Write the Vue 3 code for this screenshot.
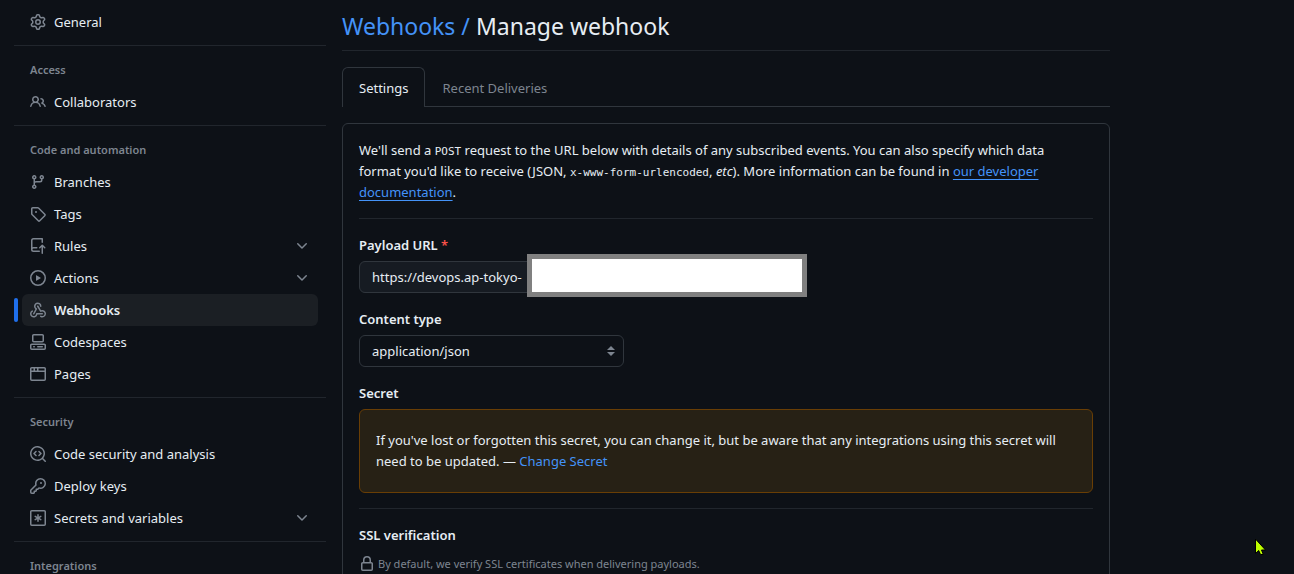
<script setup>
import { ref } from 'vue'

const payloadUrl = ref('https://devops.ap-tokyo-')
const contentType = ref('application/json')

const icons = {
  gear: 'M8 0a8.2 8.2 0 0 1 .701.031C9.444.095 9.99.645 10.16 1.29l.288 1.107c.018.066.079.158.212.224.231.114.454.243.668.386.123.082.233.09.299.071l1.103-.303c.644-.176 1.392.021 1.82.63.27.385.506.792.704 1.218.315.675.111 1.422-.364 1.891l-.814.806c-.049.048-.098.147-.088.294.016.257.016.515 0 .772-.01.147.038.246.088.294l.814.806c.475.469.679 1.216.364 1.891a7.977 7.977 0 0 1-.704 1.217c-.428.61-1.176.807-1.82.63l-1.102-.302c-.067-.019-.177-.011-.3.071a5.909 5.909 0 0 1-.668.386c-.133.066-.194.158-.211.224l-.29 1.106c-.168.646-.715 1.196-1.458 1.26a8.006 8.006 0 0 1-1.402 0c-.743-.064-1.289-.614-1.458-1.26l-.289-1.106c-.018-.066-.079-.158-.212-.224a5.738 5.738 0 0 1-.668-.386c-.123-.082-.233-.09-.299-.071l-1.103.303c-.644.176-1.392-.021-1.82-.63a8.12 8.12 0 0 1-.704-1.218c-.315-.675-.111-1.422.363-1.891l.815-.806c.05-.048.098-.147.088-.294a6.214 6.214 0 0 1 0-.772c.01-.147-.038-.246-.088-.294l-.815-.806C.635 6.045.431 5.298.746 4.623a7.92 7.92 0 0 1 .704-1.217c.428-.61 1.176-.807 1.82-.63l1.102.302c.067.019.177.011.3-.071.214-.143.437-.272.668-.386.133-.066.194-.158.211-.224l.29-1.106C6.009.645 6.556.095 7.299.03 7.53.01 7.764 0 8 0Zm-.571 1.525c-.036.003-.108.036-.137.146l-.289 1.105c-.147.561-.549.967-.998 1.189-.173.086-.34.183-.5.29-.417.278-.97.423-1.529.27l-1.103-.303c-.109-.03-.175.016-.195.045-.22.312-.412.644-.573.99-.014.031-.021.11.059.19l.815.806c.411.406.562.957.53 1.456a4.709 4.709 0 0 0 0 .582c.032.499-.119 1.05-.53 1.456l-.815.806c-.081.08-.073.159-.059.19.162.346.353.677.573.989.02.03.085.076.195.046l1.102-.303c.56-.153 1.113-.008 1.53.27.161.107.328.204.501.29.447.222.85.629.997 1.189l.289 1.105c.029.109.101.143.137.146a6.6 6.6 0 0 0 1.142 0c.036-.003.108-.036.137-.146l.289-1.105c.147-.561.549-.967.998-1.189.173-.086.34-.183.5-.29.417-.278.97-.423 1.529-.27l1.103.303c.109.029.175-.016.195-.045.22-.313.411-.644.573-.99.014-.031.021-.11-.059-.19l-.815-.806c-.411-.406-.562-.957-.53-1.456a4.709 4.709 0 0 0 0-.582c-.032-.499.119-1.05.53-1.456l.815-.806c.081-.08.073-.159.059-.19a6.464 6.464 0 0 0-.573-.989c-.02-.03-.085-.076-.195-.046l-1.102.303c-.56.153-1.113.008-1.53-.27a4.44 4.44 0 0 0-.501-.29c-.447-.222-.85-.629-.997-1.189l-.289-1.105c-.029-.11-.101-.143-.137-.146a6.6 6.6 0 0 0-1.142 0ZM11 8a3 3 0 1 1-6 0 3 3 0 0 1 6 0ZM9.5 8a1.5 1.5 0 1 0-3.001.001A1.5 1.5 0 0 0 9.5 8Z',
  people: 'M2 5.5a3.5 3.5 0 1 1 5.898 2.549 5.508 5.508 0 0 1 3.034 4.084.75.75 0 1 1-1.482.235 4 4 0 0 0-7.9 0 .75.75 0 0 1-1.482-.236A5.507 5.507 0 0 1 3.102 8.05 3.493 3.493 0 0 1 2 5.5ZM11 4a3.001 3.001 0 0 1 2.22 5.018 5.01 5.01 0 0 1 2.56 3.012.749.749 0 0 1-.885.954.752.752 0 0 1-.549-.514 3.507 3.507 0 0 0-2.522-2.372.75.75 0 0 1-.574-.73v-.352a.75.75 0 0 1 .416-.672A1.5 1.5 0 0 0 11 5.5.75.75 0 0 1 11 4Zm-5.5-.5a2 2 0 1 0-.001 3.999A2 2 0 0 0 5.5 3.5Z',
  branch: 'M9.5 3.25a2.25 2.25 0 1 1 3 2.122V6A2.5 2.5 0 0 1 10 8.5H6a1 1 0 0 0-1 1v1.128a2.251 2.251 0 1 1-1.5 0V5.372a2.25 2.25 0 1 1 1.5 0v1.836A2.493 2.493 0 0 1 6 7h4a1 1 0 0 0 1-1v-.628A2.25 2.25 0 0 1 9.5 3.25Zm-6 0a.75.75 0 1 0 1.5 0 .75.75 0 0 0-1.5 0Zm8.25-.75a.75.75 0 1 0 0 1.5.75.75 0 0 0 0-1.5ZM4.25 12a.75.75 0 1 0 0 1.5.75.75 0 0 0 0-1.5Z',
  tag: 'M1 7.775V2.75C1 1.784 1.784 1 2.75 1h5.025c.464 0 .91.184 1.238.513l6.25 6.25a1.75 1.75 0 0 1 0 2.474l-5.026 5.026a1.75 1.75 0 0 1-2.474 0l-6.25-6.25A1.752 1.752 0 0 1 1 7.775Zm1.5 0c0 .066.026.13.073.177l6.25 6.25a.25.25 0 0 0 .354 0l5.025-5.025a.25.25 0 0 0 0-.354l-6.25-6.25a.25.25 0 0 0-.177-.073H2.75a.25.25 0 0 0-.25.25ZM6 5a1 1 0 1 1 0 2 1 1 0 0 1 0-2Z',
  rules: 'M1 2.5A2.5 2.5 0 0 1 3.5 0h8.75a.75.75 0 0 1 .75.75v3.5a.75.75 0 0 1-1.5 0V1.5h-8a1 1 0 0 0-1 1v6.708A2.493 2.493 0 0 1 3.5 9h3.25a.75.75 0 0 1 0 1.5H3.5a1 1 0 0 0 0 2h5.75a.75.75 0 0 1 0 1.5H3.5A2.5 2.5 0 0 1 1 11.5Zm13.23 7.79-1.224-1.224v6.184a.75.75 0 0 1-1.5 0V9.066L10.28 10.29a.75.75 0 0 1-1.06-1.061l2.505-2.504a.75.75 0 0 1 1.06 0L15.29 9.23a.751.751 0 0 1-.018 1.042.751.751 0 0 1-1.042.018Z',
  play: 'M8 0a8 8 0 1 1 0 16A8 8 0 0 1 8 0ZM1.5 8a6.5 6.5 0 1 0 13 0 6.5 6.5 0 0 0-13 0Zm4.879-2.773 4.264 2.559a.25.25 0 0 1 0 .428l-4.264 2.559A.25.25 0 0 1 6 10.559V5.442a.25.25 0 0 1 .379-.215Z',
  webhook: 'M5.5 4.25a2.25 2.25 0 0 1 4.5 0 .75.75 0 0 0 1.5 0 3.75 3.75 0 1 0-6.14 2.889l-2.272 4.258a.75.75 0 0 0 1.324.706L7 7.25a.75.75 0 0 0-.309-1.015A2.25 2.25 0 0 1 5.5 4.25Z M7.364 3.607a.75.75 0 0 1 1.03.257l2.608 4.349a3.75 3.75 0 1 1-.628 6.785.75.75 0 0 1 .752-1.299 2.25 2.25 0 1 0-.033-3.88.75.75 0 0 1-1.03-.256L7.107 4.636a.75.75 0 0 1 .257-1.03Z M2.9 8.776A.75.75 0 0 1 2.625 9.8 2.25 2.25 0 1 0 6 11.75a.75.75 0 0 1 .75-.751h5.5a.75.75 0 0 1 0 1.5H7.425a3.751 3.751 0 1 1-5.55-3.998.75.75 0 0 1 1.024.274Z',
  codespaces: 'M0 11.25c0-.966.784-1.75 1.75-1.75h12.5c.966 0 1.75.784 1.75 1.75v3A1.75 1.75 0 0 1 14.25 16H1.75A1.75 1.75 0 0 1 0 14.25Zm2-9.5C2 .784 2.784 0 3.75 0h8.5C13.216 0 14 .784 14 1.75v5a1.75 1.75 0 0 1-1.75 1.75h-8.5A1.75 1.75 0 0 1 2 6.75Zm1.75-.25a.25.25 0 0 0-.25.25v5c0 .138.112.25.25.25h8.5a.25.25 0 0 0 .25-.25v-5a.25.25 0 0 0-.25-.25Zm-2 9.5a.25.25 0 0 0-.25.25v3c0 .138.112.25.25.25h12.5a.25.25 0 0 0 .25-.25v-3a.25.25 0 0 0-.25-.25ZM7 12.75a.75.75 0 0 1 .75-.75h4.5a.75.75 0 0 1 0 1.5h-4.5a.75.75 0 0 1-.75-.75Zm-4 0a.75.75 0 0 1 .75-.75h.5a.75.75 0 0 1 0 1.5h-.5a.75.75 0 0 1-.75-.75Z',
  browser: 'M0 2.75C0 1.784.784 1 1.75 1h12.5c.966 0 1.75.784 1.75 1.75v10.5A1.75 1.75 0 0 1 14.25 15H1.75A1.75 1.75 0 0 1 0 13.25ZM14.5 6h-13v7.25c0 .138.112.25.25.25h12.5a.25.25 0 0 0 .25-.25Zm-6-3.5v2h6V2.75a.25.25 0 0 0-.25-.25ZM5 2.5v2h2v-2Zm-3.25 0a.25.25 0 0 0-.25.25V4.5h2v-2Z',
  codescan: 'M8.47 4.97a.75.75 0 0 0 0 1.06L9.94 7.5 8.47 8.97a.75.75 0 1 0 1.06 1.06l2-2a.75.75 0 0 0 0-1.06l-2-2a.75.75 0 0 0-1.06 0ZM6.53 6.03a.75.75 0 0 0-1.06-1.06l-2 2a.75.75 0 0 0 0 1.06l2 2a.75.75 0 1 0 1.06-1.06L5.06 7.5l1.47-1.47Z M12.246 13.307a7.501 7.501 0 1 1 1.06-1.06l2.474 2.473a.749.749 0 0 1-.326 1.275.749.749 0 0 1-.734-.215ZM1.5 7.5a6.002 6.002 0 0 0 3.608 5.504 6.002 6.002 0 0 0 6.486-1.117.748.748 0 0 1 .292-.293A6 6 0 1 0 1.5 7.5Z',
  key: 'M10.5 0a5.499 5.499 0 1 1-1.288 10.848l-.932.932a.749.749 0 0 1-.53.22H7v.75a.749.749 0 0 1-.22.53l-.5.5a.749.749 0 0 1-.53.22H5v.75a.749.749 0 0 1-.22.53l-.5.5a.749.749 0 0 1-.53.22h-2A1.75 1.75 0 0 1 0 14.25v-2c0-.199.079-.389.22-.53l4.932-4.932A5.5 5.5 0 0 1 10.5 0Zm-4 5.5c-.001.431.069.86.205 1.269a.75.75 0 0 1-.181.768L1.5 12.56v1.69c0 .138.112.25.25.25h1.69l.06-.06v-1.19a.75.75 0 0 1 .75-.75h1.19l.06-.06v-1.19a.75.75 0 0 1 .75-.75h1.19l1.023-1.025a.75.75 0 0 1 .768-.18A4 4 0 1 0 6.5 5.5ZM11 6a1 1 0 1 1 0-2 1 1 0 0 1 0 2Z',
  asterisk: 'M1.75 0h12.5C15.216 0 16 .784 16 1.75v12.5A1.75 1.75 0 0 1 14.25 16H1.75A1.75 1.75 0 0 1 0 14.25V1.75C0 .784.784 0 1.75 0ZM1.5 1.75v12.5c0 .138.112.25.25.25h12.5a.25.25 0 0 0 .25-.25V1.75a.25.25 0 0 0-.25-.25H1.75a.25.25 0 0 0-.25.25ZM8 4a.75.75 0 0 1 .75.75V6.7l1.69-.975a.75.75 0 0 1 .75 1.3L9.5 8l1.69.976a.75.75 0 0 1-.75 1.298L8.75 9.3v1.951a.75.75 0 0 1-1.5 0V9.299l-1.69.976a.75.75 0 0 1-.75-1.3L6.5 8l-1.69-.975a.75.75 0 0 1 .75-1.3l1.69.976V4.75A.75.75 0 0 1 8 4Z',
  chevron: 'M12.78 5.22a.749.749 0 0 1 0 1.06l-4.25 4.25a.749.749 0 0 1-1.06 0L3.22 6.28a.749.749 0 1 1 1.06-1.06L8 8.939l3.72-3.719a.749.749 0 0 1 1.06 0Z',
  lock: 'M4 4a4 4 0 0 1 8 0v2h.25c.966 0 1.75.784 1.75 1.75v5.5A1.75 1.75 0 0 1 12.25 15h-8.5A1.75 1.75 0 0 1 2 13.25v-5.5C2 6.784 2.784 6 3.75 6H4Zm8.25 3.5h-8.5a.25.25 0 0 0-.25.25v5.5c0 .138.112.25.25.25h8.5a.25.25 0 0 0 .25-.25v-5.5a.25.25 0 0 0-.25-.25ZM10.5 6V4a2.5 2.5 0 1 0-5 0v2Z',
}

const sections = [
  { items: [{ label: 'General', icon: 'gear' }] },
  { title: 'Access', items: [{ label: 'Collaborators', icon: 'people' }] },
  {
    title: 'Code and automation',
    items: [
      { label: 'Branches', icon: 'branch' },
      { label: 'Tags', icon: 'tag' },
      { label: 'Rules', icon: 'rules', expandable: true },
      { label: 'Actions', icon: 'play', expandable: true },
      { label: 'Webhooks', icon: 'webhook', current: true },
      { label: 'Codespaces', icon: 'codespaces' },
      { label: 'Pages', icon: 'browser' },
    ],
  },
  {
    title: 'Security',
    items: [
      { label: 'Code security and analysis', icon: 'codescan' },
      { label: 'Deploy keys', icon: 'key' },
      { label: 'Secrets and variables', icon: 'asterisk', expandable: true },
    ],
  },
  { title: 'Integrations', items: [] },
]
</script>

<template>
  <div class="page">
    <nav class="sidebar" aria-label="Repository settings">
      <section v-for="(section, i) in sections" :key="i" class="group">
        <h3 v-if="section.title" class="group-title">{{ section.title }}</h3>
        <ul v-if="section.items.length" class="items">
          <li v-for="item in section.items" :key="item.label" class="item" :class="{ current: item.current }">
            <component
              :is="item.expandable ? 'button' : 'a'"
              class="item-link"
              :href="item.expandable ? undefined : '#'"
              :type="item.expandable ? 'button' : undefined"
              :aria-expanded="item.expandable ? 'false' : undefined"
              :aria-current="item.current ? 'page' : undefined"
            >
              <svg class="icon" viewBox="0 0 16 16" aria-hidden="true"><path :d="icons[item.icon]" /></svg>
              <span class="item-label">{{ item.label }}</span>
              <svg v-if="item.expandable" class="icon" viewBox="0 0 16 16" aria-hidden="true"><path :d="icons.chevron" /></svg>
            </component>
          </li>
        </ul>
      </section>
    </nav>

    <main class="content">
      <h1 class="heading"><a class="link" href="#">Webhooks /</a> Manage webhook</h1>

      <nav class="tabs" aria-label="Webhook">
        <a class="tab selected" href="#" aria-current="page">Settings</a>
        <a class="tab" href="#">Recent Deliveries</a>
      </nav>

      <form class="panel" @submit.prevent>
        <p class="intro">
          We'll send a <code>POST</code> request to the URL below with details of any subscribed events. You can also
          specify which data format you'd like to receive (JSON, <code>x-www-form-urlencoded</code>, <em>etc</em>). More
          information can be found in <a class="link underlined" href="#">our developer documentation</a>.
        </p>
        <hr class="rule" />

        <div class="field">
          <label class="label" for="payload-url">Payload URL <span class="required">*</span></label>
          <div class="control url-control">
            <input id="payload-url" v-model="payloadUrl" class="box url" type="text" spellcheck="false" />
            <span class="mask" aria-hidden="true"></span>
          </div>
        </div>

        <div class="field">
          <label class="label" for="content-type">Content type</label>
          <div class="control select-control">
            <select id="content-type" v-model="contentType" class="box select">
              <option>application/json</option>
              <option>application/x-www-form-urlencoded</option>
            </select>
            <svg class="arrows" viewBox="0 0 8 10" aria-hidden="true"><path d="M4 0l4 4H0zM0 6h8l-4 4z" /></svg>
          </div>
        </div>

        <h2 class="label">Secret</h2>
        <p class="flash">
          If you've lost or forgotten this secret, you can change it, but be aware that any integrations using this
          secret will need to be updated. — <a class="link" href="#">Change Secret</a>
        </p>
        <hr class="rule" />

        <h2 class="label">SSL verification</h2>
        <p class="note">
          <svg class="icon" viewBox="0 0 16 16" aria-hidden="true"><path :d="icons.lock" /></svg>
          By default, we verify SSL certificates when delivering payloads.
        </p>
      </form>
    </main>

    <svg class="pointer" viewBox="0 0 12 18" aria-hidden="true">
      <path d="M1.500 1v14.500l3.200-3 1.800 4h2.800l-1.800-4.500h4z" />
    </svg>
  </div>
</template>

<style>
body {
  background: #0d1117;
}
</style>

<style scoped>
.page {
  position: relative;
  box-sizing: border-box;
  display: grid;
  grid-template-columns: 312px minmax(0, 768px);
  align-items: start;
  gap: 16px;
  height: 100vh;
  padding: 6px 14px 0;
  overflow: hidden;
  background: #0d1117;
  color: #e6edf3;
  font-family: "Noto Sans", "Open Sans", sans-serif;
  font-size: 13px;
  line-height: 21px;
}

h1,
h2,
h3,
p,
ul {
  margin: 0;
  padding: 0;
}

.icon {
  flex: none;
  width: 16px;
  height: 16px;
  fill: #7d8590;
}

.link {
  color: #4493f8;
  text-decoration: none;
}

.group + .group {
  margin-top: 7px;
  border-top: 1px solid #21262d;
}

.group-title {
  padding: 16px 16px 8px;
  color: #7d8590;
  font-size: 11px;
  font-weight: 600;
  line-height: 16px;
}

.items {
  list-style: none;
}

.item {
  position: relative;
  margin: 0 8px;
  border-radius: 6px;
}

.item-link {
  box-sizing: border-box;
  display: flex;
  align-items: center;
  gap: 8px;
  width: 100%;
  height: 32px;
  padding: 0 8px;
  border: 0;
  background: none;
  color: inherit;
  font: inherit;
  text-align: left;
  text-decoration: none;
}

.item-label {
  flex: 1;
}

.current {
  background: #1b1f24;
  font-weight: 600;
}

.current::before {
  content: "";
  position: absolute;
  top: 4px;
  bottom: 4px;
  left: -8px;
  width: 4px;
  border-radius: 6px;
  background: #1f6feb;
}

.heading {
  padding: 2px 0 6px;
  border-bottom: 1px solid #21262d;
  font-size: 23px;
  font-weight: 400;
  line-height: 36px;
}

.tabs {
  display: flex;
  margin: 16px 0;
  border-bottom: 1px solid #30363d;
}

.tab {
  margin-bottom: -1px;
  padding: 10px 16px 8px;
  border: 1px solid transparent;
  border-bottom: 0;
  color: #7d8590;
  text-decoration: none;
}

.selected {
  border-color: #30363d;
  border-radius: 6px 6px 0 0;
  background: #0d1117;
  color: #e6edf3;
}

.panel {
  padding: 16px 16px 48px;
  border: 1px solid #30363d;
  border-radius: 6px;
}

.intro {
  padding-right: 16px;
}

code {
  font-family: "DejaVu Sans Mono", monospace;
  font-size: 11px;
  line-height: 1;
}

.underlined {
  text-decoration: underline;
  text-underline-offset: 3px;
}

.rule {
  height: 1px;
  margin: 15px 0 16px;
  border: 0;
  background: #21262d;
}

.field {
  margin-bottom: 16px;
}

.label {
  display: block;
  margin-bottom: 5px;
  font-size: 13px;
  font-weight: 600;
  line-height: 21px;
}

.required {
  color: #f85149;
}

.control {
  position: relative;
}

.url-control {
  max-width: 440px;
}

.select-control {
  max-width: 265px;
}

.box {
  box-sizing: border-box;
  display: block;
  width: 100%;
  height: 32px;
  margin: 0;
  padding: 0 12px;
  border: 1px solid #30363d;
  border-radius: 6px;
  outline: 0;
  color: inherit;
  font: inherit;
}

.url {
  background: #161b22;
}

.select {
  appearance: none;
  background: #0d1117;
}

.mask {
  position: absolute;
  top: -7px;
  left: 168px;
  box-sizing: border-box;
  width: 280px;
  height: 43px;
  border: 5px solid #808080;
  background: #fff;
}

.arrows {
  position: absolute;
  top: 11px;
  right: 9px;
  width: 8px;
  height: 10px;
  fill: #7d8590;
  pointer-events: none;
}

.flash {
  padding: 20px 16px;
  border: 1px solid #693e05;
  border-radius: 6px;
  background: #272115;
}

.note {
  display: flex;
  align-items: center;
  gap: 3px;
  padding-top: 2px;
  color: #7d8590;
  font-size: 11px;
}

.pointer {
  position: absolute;
  right: 28px;
  bottom: 18px;
  width: 12px;
  height: 18px;
  fill: #bfff00;
  stroke: #000;
  stroke-width: 1;
}
</style>
